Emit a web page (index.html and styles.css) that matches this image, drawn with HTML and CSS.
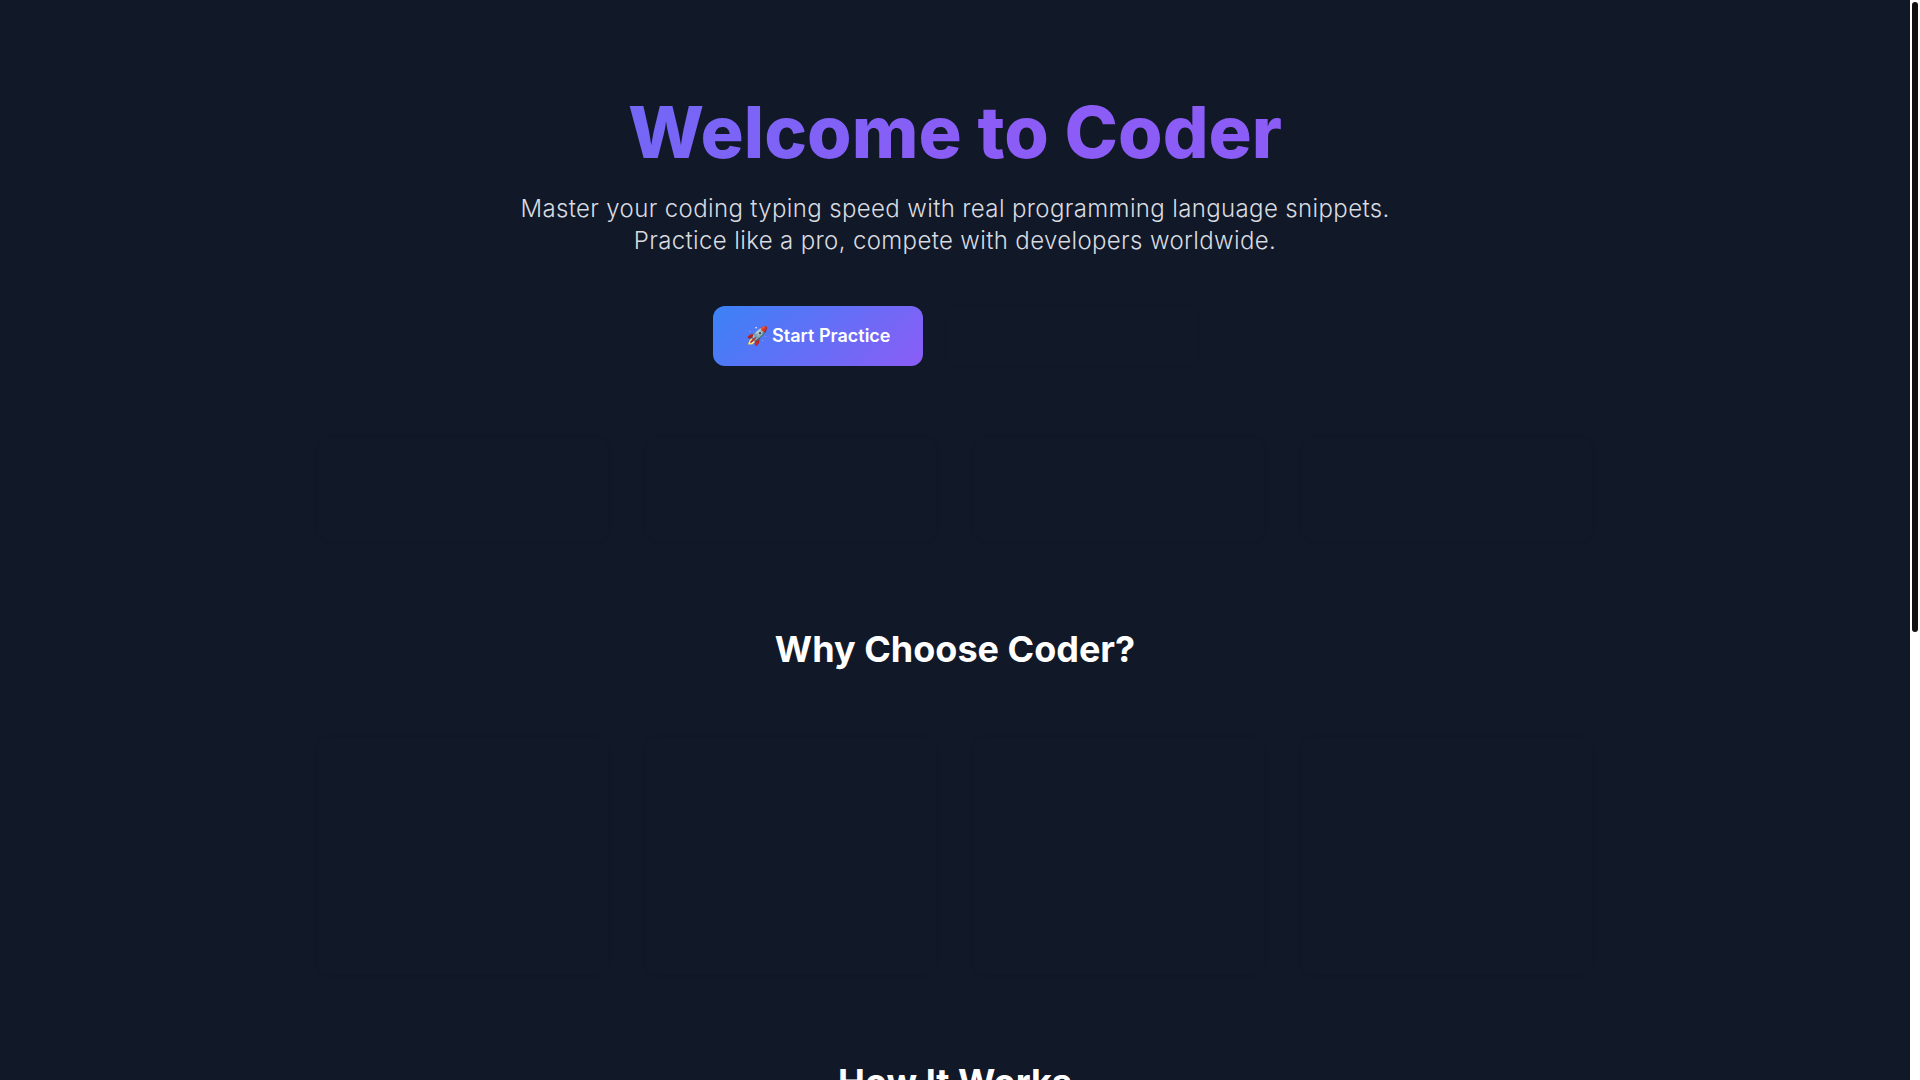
FILE: index.html
```html
<!DOCTYPE html>
<html lang="en">
<head>
  <meta charset="UTF-8" />
  <meta name="viewport" content="width=device-width, initial-scale=1.0"/>
  <title>Coder</title>
  <link rel="stylesheet" href="styles.css">
</head>
<body>
  <div class="viewport">
    <main class="page">
      <section class="hero">
        <h1 class="hero-title">Welcome to Coder</h1>
        <p class="hero-text">Master your coding typing speed with real programming language snippets.<br>Practice like a pro, compete with developers worldwide.</p>
        <div class="hero-actions">
          <a class="btn btn-primary" href="#">🚀 Start Practice</a>
          <a class="btn btn-ghost" href="#"></a>
        </div>
      </section>

      <!-- stats -->
      <div class="card-grid stats">
        <div class="card"></div>
        <div class="card"></div>
        <div class="card"></div>
        <div class="card"></div>
      </div>

      <section class="section">
        <h2 class="section-title">Why Choose Coder?</h2>
        <div class="card-grid features">
          <div class="card"></div>
          <div class="card"></div>
          <div class="card"></div>
          <div class="card"></div>
        </div>
      </section>

      <section class="section how">
        <h2 class="section-title">How It Works</h2>
      </section>
    </main>
  </div>
  <div class="scrollbar"><div class="scrollbar-thumb"></div></div>
</body>
</html>
```
FILE: styles.css
```css
body {
  display: flex;
  height: 100vh;
  margin: 0;
  overflow: hidden;
  background-color: #111827;
  color: white;
  font-family: "Inter", "Liberation Sans", sans-serif;
}

.viewport {
  flex: 1;
  overflow: hidden;
}

.scrollbar {
  flex: none;
  box-sizing: border-box;
  width: 10px;
  padding: 2px;
  background-color: white;
}

.scrollbar-thumb {
  height: 630px;
  border-radius: 3px;
  background-color: #111;
}

.page {
  width: 1280px;
  margin: 0 auto;
}

.hero {
  padding-top: 88px;
  text-align: center;
}

.hero-title {
  margin: 0 0 17px;
  font-size: 72px;
  line-height: 88px;
  font-weight: 800;
  background: linear-gradient(135deg, #3b82f6 -40%, #8b5cf6 52%);
  -webkit-background-clip: text;
  background-clip: text;
  color: transparent;
}

.hero-text {
  margin: 0 0 49px;
  font-size: 24px;
  line-height: 32px;
  font-weight: 300;
  letter-spacing: 0.36px;
  color: #d8dbe0;
}

.hero-actions {
  display: flex;
  justify-content: center;
  gap: 24px;
}

.btn {
  display: block;
  box-sizing: border-box;
  height: 60px;
  padding: 0 31.5px;
  border: 1px solid transparent;
  border-radius: 12px;
  font-size: 18px;
  font-weight: 600;
  line-height: 58px;
  color: white;
  text-decoration: none;
}

.btn-primary {
  background: linear-gradient(135deg, #3b82f6, #8b5cf6) border-box;
}

.btn-ghost {
  width: 250px;
  box-shadow: 0 0 3px rgba(0, 0, 0, 0.08);
}

.card-grid {
  display: grid;
  grid-template-columns: repeat(4, 1fr);
  gap: 38px;
  padding: 0 3px;
}

.stats {
  margin-top: 71px;
}

.stats .card {
  height: 104px;
}

.features .card {
  height: 238px;
}

.card {
  border-radius: 12px;
  box-shadow: 0 0 4px rgba(0, 0, 0, 0.11);
}

.section {
  margin-top: 88px;
}

.section-title {
  margin: 0 0 68px;
  font-size: 36px;
  line-height: 40px;
  font-weight: 700;
  text-align: center;
}

.how {
  margin-top: 87px;
}
```
